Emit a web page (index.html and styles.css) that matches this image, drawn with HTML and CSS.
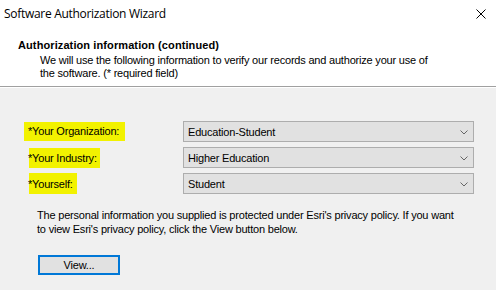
FILE: index.html
```html
<!DOCTYPE html>
<html>
<head>
<meta charset="utf-8">
<link rel="stylesheet" href="styles.css">
</head>
<body>
<div class="window">
  <div class="titlebar">
    <span class="title">Software Authorization Wizard</span>
    <svg class="close" width="10" height="10" viewBox="0 0 10 10"><path d="M0.5 0.5 L9.5 9.5 M9.5 0.5 L0.5 9.5" stroke="#000" stroke-width="1" fill="none"/></svg>
  </div>
  <div class="header">
    <div class="heading">Authorization information (continued)</div>
    <div class="desc">We will use the following information to verify our records and authorize your use of the software. (* required field)</div>
  </div>
  <div class="content">
    <div class="form">
      <div class="label"><span class="hl hl1">*Your Organization:</span></div>
      <div class="select"><span>Education-Student</span><svg class="chev" width="8" height="5" viewBox="0 0 8 5"><path d="M0.5 0.5 L4 4 L7.5 0.5" stroke="#666" stroke-width="1" fill="none"/></svg></div>
      <div class="label"><span class="hl hl2">*Your Industry:</span></div>
      <div class="select"><span>Higher Education</span><svg class="chev" width="8" height="5" viewBox="0 0 8 5"><path d="M0.5 0.5 L4 4 L7.5 0.5" stroke="#666" stroke-width="1" fill="none"/></svg></div>
      <div class="label"><span class="hl hl3">*Yourself:</span></div>
      <div class="select"><span>Student</span><svg class="chev" width="8" height="5" viewBox="0 0 8 5"><path d="M0.5 0.5 L4 4 L7.5 0.5" stroke="#666" stroke-width="1" fill="none"/></svg></div>
    </div>
    <p class="privacy">The personal information you supplied is protected under Esri's privacy policy. If you want to view Esri's privacy policy, click the View button below.</p>
    <button class="btn">View...</button>
  </div>
</div>
</body>
</html>
```
FILE: styles.css
```css
html, body {
  margin: 0;
  padding: 0;
}
body {
  font-family: "Liberation Sans", Arial, sans-serif;
  font-size: 11px;
  letter-spacing: -0.2px;
  color: #000;
  background: #f0f0f0;
}
.window {
  width: 496px;
  height: 290px;
  overflow: hidden;
  background: #f0f0f0;
}
.titlebar {
  height: 30px;
  background: #fff;
  display: flex;
  align-items: center;
  justify-content: space-between;
  padding: 0 10px 0 4px;
  box-sizing: border-box;
}
.title {
  font-family: "Open Sans", "Noto Sans", sans-serif;
  font-size: 12px;
  margin-top: -3px;
  letter-spacing: -0.3px;
}
.close {
  margin-top: -2px;
}
.header {
  background: #fff;
  height: 57px;
  box-sizing: border-box;
  padding: 9px 0 0 18px;
  border-bottom: 1px solid #a0a0a0;
  box-shadow: 0 1px 0 #fff;
}
.heading {
  font-weight: bold;
  line-height: 13px;
  letter-spacing: 0.1px;
}
.desc {
  padding-left: 22px;
  width: 400px;
  line-height: 13px;
  margin-top: 2px;
}
.content {
  padding: 34px 0 0 28px;
}
.form {
  display: grid;
  grid-template-columns: 155px 291px;
  row-gap: 5px;
  align-items: center;
}
.label {
  height: 21px;
  display: flex;
  align-items: center;
}
.hl {
  background: #f2f200;
}
.hl1 { padding: 3px 6px 4px 4px; margin-left: -4px; }
.hl2 { padding: 4px 3px 4px 0; box-shadow: inset 1px 0 0 #f0f0f0; }
.hl3 { padding: 5px 4px 4px 0; box-shadow: inset 1px 0 0 #f0f0f0; }
.select {
  height: 21px;
  box-sizing: border-box;
  border: 1px solid #adadad;
  background: #e1e1e1;
  display: flex;
  align-items: center;
  justify-content: space-between;
  padding: 0 5px 0 4px;
}
.chev {
  margin-top: 1px;
}
.privacy {
  margin: 14px 0 0 9px;
  width: 424px;
  line-height: 14px;
}
.btn {
  display: block;
  margin: 19px 0 0 10px;
  width: 82px;
  height: 20px;
  box-sizing: border-box;
  border: 2px solid #0078d7;
  background: #e1e1e1;
  font-family: "Liberation Sans", Arial, sans-serif;
  font-size: 11px;
  letter-spacing: -0.2px;
  padding: 0;
  color: #000;
}
```
